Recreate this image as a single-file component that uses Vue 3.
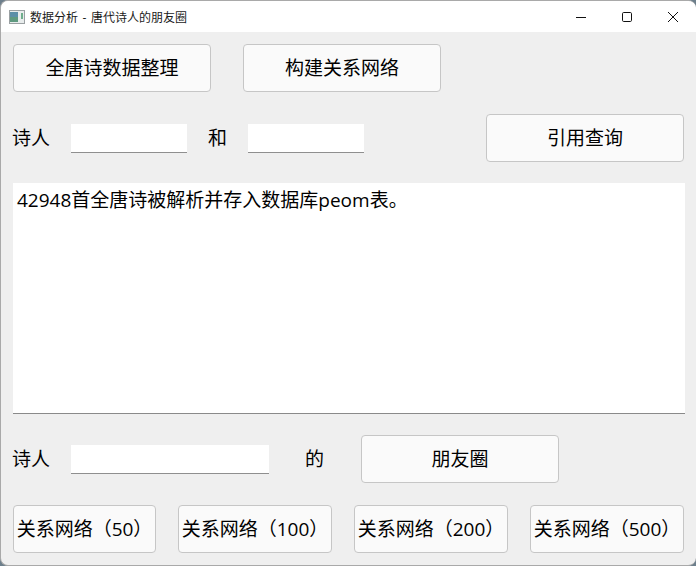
<template>
  <div class="window">
    <div class="titlebar">
      <svg class="app-icon" width="16" height="14" viewBox="0 0 16 14">
        <rect x="0.5" y="0.5" width="15" height="13" fill="#e8ecec" stroke="#9aa0a2" />
        <rect x="1" y="2" width="8" height="10" fill="#5b8fa8" />
        <rect x="1" y="7" width="8" height="5" fill="#5f9a80" />
        <rect x="12" y="3" width="2" height="6" fill="#6fae8c" />
      </svg>
      <span class="title">数据分析 - 唐代诗人的朋友圈</span>
      <div class="controls">
        <svg width="12" height="12" viewBox="0 0 12 12"><path d="M1 6.5h10" stroke="#111" fill="none" /></svg>
        <svg width="12" height="12" viewBox="0 0 12 12"><rect x="1.5" y="1.5" width="9" height="9" rx="1.2" stroke="#111" fill="none" /></svg>
        <svg width="12" height="12" viewBox="0 0 12 12"><path d="M1 1l10 10M11 1L1 11" stroke="#111" fill="none" /></svg>
      </div>
    </div>

    <div class="content">
      <div class="row-top">
        <button class="btn btn-wide">全唐诗数据整理</button>
        <button class="btn btn-wide">构建关系网络</button>
      </div>

      <div class="row-query">
        <label class="label">诗人</label>
        <input class="field field-short" type="text">
        <label class="label label-and">和</label>
        <input class="field field-short" type="text">
        <button class="btn btn-wide btn-end">引用查询</button>
      </div>

      <div class="output">{{ output }}</div>

      <div class="row-friends">
        <label class="label">诗人</label>
        <input class="field field-long" type="text">
        <label class="label label-of">的</label>
        <button class="btn btn-wide">朋友圈</button>
      </div>

      <div class="row-network">
        <button v-for="n in networks" :key="n.size" class="btn btn-net" :class="n.cls">关系网络（{{ n.size }}）</button>
      </div>
    </div>
  </div>
</template>

<script setup>
import { ref } from 'vue';

const output = ref('42948首全唐诗被解析并存入数据库peom表。');
const networks = ref([
  { size: 50, cls: 'first' },
  { size: 100, cls: '' },
  { size: 200, cls: '' },
  { size: 500, cls: '' },
]);
</script>

<style>
html,
body {
  margin: 0;
  background: #6d7f8c;
}
</style>

<style scoped>
.window {
  width: 696px;
  height: 566px;
  box-sizing: border-box;
  background: #efefef;
  border: 1px solid #a9a9a9;
  border-right: none;
  border-radius: 8px;
  overflow: hidden;
  font-family: "Open Sans", "Noto Sans CJK SC", sans-serif;
  color: #000;
}

.titlebar {
  height: 31px;
  background: #fff;
  display: flex;
  align-items: center;
  padding-left: 8px;
}

.app-icon {
  margin-right: 5px;
}

.title {
  font-size: 12px;
  word-spacing: 1.5px;
  color: #1a1a1a;
}

.controls {
  margin-left: auto;
  display: flex;
  gap: 34px;
  padding-right: 17px;
}

.content {
  padding: 12px 11px 0 12px;
}

.btn {
  box-sizing: border-box;
  height: 48px;
  background: #fafafa;
  border: 1px solid #c6c6c6;
  border-radius: 4px;
  font-family: inherit;
  font-size: 19px;
  color: #000;
  padding: 0 0 2px;
  white-space: nowrap;
}

.btn-wide {
  width: 198px;
}

.row-top {
  display: flex;
  gap: 32px;
}

.row-query {
  display: flex;
  align-items: center;
  margin-top: 22px;
}

.label {
  font-size: 19px;
  line-height: 28px;
}

.label:first-child {
  margin-left: -1px;
  width: 59px;
}

.label-and {
  box-sizing: border-box;
  width: 61px;
  padding-left: 21px;
}

.label-of {
  box-sizing: border-box;
  width: 92px;
  padding-left: 36px;
}

.field {
  box-sizing: border-box;
  height: 29px;
  background: #fff;
  border: none;
  border-bottom: 1px solid #8f8f8f;
  padding: 0;
  outline: none;
}

.field-short {
  width: 116px;
}

.field-long {
  width: 198px;
}

.btn-end {
  margin-left: 122px;
}

.output {
  box-sizing: border-box;
  width: 672px;
  height: 231px;
  margin-top: 21px;
  padding: 3px 4px;
  background: #fff;
  border-bottom: 1px solid #8a8a8a;
  font-size: 19px;
  line-height: 28px;
}

.row-friends {
  display: flex;
  align-items: center;
  margin-top: 21px;
}

.row-network {
  display: flex;
  gap: 22px;
  margin-top: 22px;
}

.btn-net {
  width: 154px;
}

.btn-net.first {
  width: 143px;
}
</style>
